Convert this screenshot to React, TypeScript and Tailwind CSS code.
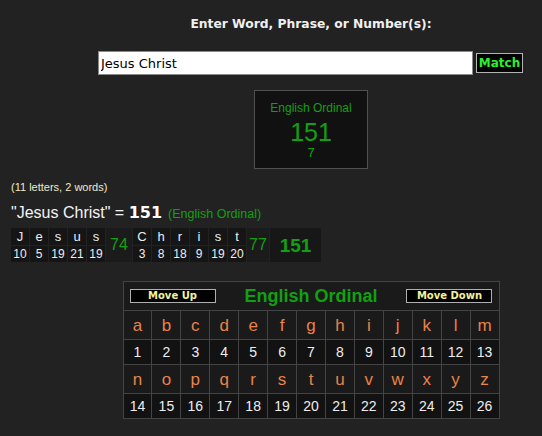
import React from "react";

const verdana = { fontFamily: '"DejaVu Sans", Verdana, sans-serif' };

const phrase = "Jesus Christ";
const words = phrase.split(" ");
const value = (c: string) => c.toLowerCase().charCodeAt(0) - 96;
const wordSum = (w: string) => w.split("").reduce((a, c) => a + value(c), 0);

const alphabet = "abcdefghijklmnopqrstuvwxyz".split("");

function Breakdown() {
  const total = words.reduce((t, w) => t + wordSum(w), 0);
  return (
    <div className="ml-[10px] mt-[4px] flex w-fit gap-[1px] p-[1px]">
      {words.map((w, wi) => (
        <React.Fragment key={w}>
          {w.split("").map((c, i) => (
            <div key={i} className="flex w-[18px] flex-col gap-[1px]">
              <div className="flex h-[17px] items-center justify-center bg-[#151515] text-[13px] leading-none text-[#eeeeee]">{c}</div>
              <div className="flex h-[16px] items-center justify-center bg-[#151515] text-[12px] leading-none text-[#eeeeee]">{value(c)}</div>
            </div>
          ))}
          <div
            className={`flex items-center justify-center bg-[#1b1b1b] text-[16px] leading-none text-[#11a011] ${wi === 0 ? "w-[26px]" : "w-[22px]"}`}
          >
            {wordSum(w)}
          </div>
        </React.Fragment>
      ))}
      <div className="flex w-[51px] items-center justify-center bg-[#171717] text-[19px] font-bold leading-none text-[#11a011]">
        {total}
      </div>
    </div>
  );
}

function CipherTable() {
  const rows = [alphabet.slice(0, 13), alphabet.slice(13)];
  return (
    <div className="mt-[18px] flex justify-center pl-[80px]">
      <table className="w-[377px] table-fixed border-collapse border border-[#444444]">
        <tbody>
          <tr className="h-[29px]">
            <td colSpan={13} className="border border-[#444444] bg-[#1a1a1a] p-0">
              <div className="flex items-center justify-between px-[6px]">
                <button style={verdana} className="h-[14px] w-[86px] border border-[#b0b0b0] bg-black text-[10px] font-bold leading-none text-[#f2f29a]">
                  Move Up
                </button>
                <span className="text-[18px] font-bold leading-none text-[#11a011]">English Ordinal</span>
                <button style={verdana} className="h-[14px] w-[86px] border border-[#b0b0b0] bg-black text-[10px] font-bold leading-none text-[#f2f29a]">
                  Move Down
                </button>
              </div>
            </td>
          </tr>
          {rows.map((r, ri) => (
            <React.Fragment key={ri}>
              <tr className="h-[29px]">
                {r.map((c) => (
                  <td key={c} className="border border-[#444444] bg-[#1a1a1a] p-0 text-center text-[17px] leading-none text-[#e8834a]">
                    {c}
                  </td>
                ))}
              </tr>
              <tr className="h-[25px]">
                {r.map((c) => (
                  <td key={c} className="border border-[#444444] bg-[#121212] p-0 text-center text-[14px] leading-none text-[#eeeeee]">
                    {value(c)}
                  </td>
                ))}
              </tr>
            </React.Fragment>
          ))}
        </tbody>
      </table>
    </div>
  );
}

export default function App() {
  return (
    <div className="min-h-[436px] w-full bg-[#222222] pt-[16px]" style={{ fontFamily: '"Liberation Sans", Arial, sans-serif' }}>
      <div className="pl-[80px] text-center text-[12.3px] font-bold leading-[16px] text-[#f0f0f0]" style={verdana}>
        Enter Word, Phrase, or Number(s):
      </div>

      <div className="mt-[19px] flex items-center pl-[98px]">
        <input
          readOnly
          value={phrase}
          style={verdana}
          className="h-[24px] w-[375px] border border-[#8a8a8a] bg-white px-[2px] text-[13px] text-black outline-none"
        />
        <button style={verdana} className="ml-[3px] h-[20px] w-[47px] border border-[#b4b4b4] bg-black text-[12px] font-bold leading-none text-[#2cf02c]">
          Match
        </button>
      </div>

      <div className="mt-[15px] flex justify-center pl-[80px]">
        <div className="flex h-[79px] w-[114px] flex-col items-center border border-[#505050] bg-[#111111] pt-[10px] text-[#11a011]">
          <div className="text-[12px] leading-[14px]">English Ordinal</div>
          <div className="mt-[4px] text-[25px] leading-[26px]">151</div>
          <div className="mt-[1px] text-[13px] leading-[14px]">7</div>
        </div>
      </div>

      <div className="ml-[11px] mt-[12px] text-[11px] leading-[13px] text-[#eeeacc]">(11 letters, 2 words)</div>

      <div className="ml-[11px] mt-[10px] flex items-baseline leading-[18px]">
        <span className="whitespace-pre text-[16px] text-[#f4f4f4]">"Jesus Christ" = </span>
        <span style={verdana} className="text-[16px] font-bold text-white">151</span>
        <span className="ml-[6px] text-[12.5px] text-[#11a011]">(English Ordinal)</span>
      </div>

      <Breakdown />
      <CipherTable />
    </div>
  );
}
